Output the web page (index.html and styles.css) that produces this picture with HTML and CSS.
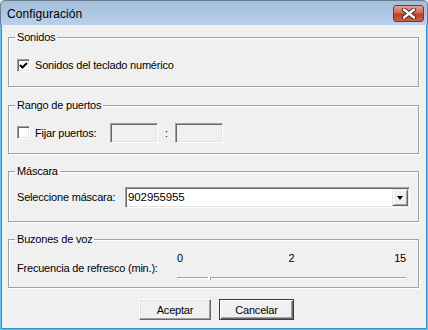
FILE: index.html
```html
<!DOCTYPE html>
<html lang="es">
<head>
  <meta charset="utf-8"/>
  <title>Configuración</title>
  <link rel="stylesheet" href="styles.css">
</head>
<body>
  <div class="window">
    <div class="titlebar">
      <span class="title">Configuración</span>
      <span class="close">
        <svg width="16" height="11" viewBox="0 0 16 11">
          <path d="M3 1.5 L13 9.5 M13 1.5 L3 9.5" stroke="#4a1f18" stroke-width="4.2" stroke-linecap="round"/>
          <path d="M3 1.5 L13 9.5 M13 1.5 L3 9.5" stroke="#fff" stroke-width="2.4" stroke-linecap="round"/>
        </svg>
      </span>
    </div>

    <div class="client">
      <fieldset class="group">
        <legend>Sonidos</legend>
        <div class="row row-sound">
          <span class="check"><svg width="9" height="9" viewBox="0 0 9 9"><path d="M1 4 L3.5 6.5 L8 2" fill="none" stroke="#000" stroke-width="2"/></svg></span>
          <span>Sonidos del teclado numérico</span>
        </div>
      </fieldset>

      <fieldset class="group">
        <legend>Rango de puertos</legend>
        <div class="row row-ports">
          <span class="check-label">
            <span class="check"></span>
            <span>Fijar puertos:</span>
          </span>
          <span class="field"></span>
          <span class="colon">:</span>
          <span class="field"></span>
        </div>
      </fieldset>

      <fieldset class="group">
        <legend>Máscara</legend>
        <div class="row row-mask">
          <span>Seleccione máscara:</span>
          <span class="combo">
            <span class="combo-text">902955955</span>
            <span class="combo-btn"><span class="arrow"></span></span>
          </span>
        </div>
      </fieldset>

      <fieldset class="group">
        <legend>Buzones de voz</legend>
        <div class="row row-voice">
          <span class="voice-label">Frecuencia de refresco (min.):</span>
          <div class="slider">
            <div class="ticks">
              <span>0</span>
              <span class="tick-mid">2</span>
              <span>15</span>
            </div>
            <div class="track"></div>
          </div>
        </div>
      </fieldset>

      <div class="buttons">
        <button class="btn btn-ok">Aceptar</button>
        <button class="btn btn-default">Cancelar</button>
      </div>
    </div>
  </div>
</body>
</html>
```

FILE: styles.css
```css
body {
  margin: 0;
  background: #f0f0f0;
  font-family: "Liberation Sans", Arial, sans-serif;
  font-size: 11px;
  color: #000;
}
.window {
  width: 428px;
  height: 330px;
  display: flex;
  flex-direction: column;
  box-sizing: border-box;
  overflow: hidden;
}
.titlebar {
  height: 25px;
  box-sizing: border-box;
  display: flex;
  align-items: flex-start;
  justify-content: space-between;
  border: 1px solid #6a7c90;
  border-bottom: none;
  border-radius: 5px 5px 0 0;
  background: linear-gradient(#a3bedb, #b9d1ea);
}
.title {
  font-size: 12px;
  line-height: 14px;
  margin: 6px 0 0 6px;
  letter-spacing: 0.1px;
}
.close {
  width: 31px;
  height: 17px;
  box-sizing: border-box;
  margin: 4px 3px 0 0;
  border: 1px solid #6b3b33;
  border-radius: 3px;
  background: linear-gradient(#e4a08f, #cf6a55 45%, #b8412b 55%, #c9604a);
  display: flex;
  align-items: center;
  justify-content: center;
}
.client {
  flex: 1;
  background: #f0f0f0;
  border: solid #5cc8f2;
  border-width: 0 1px 1px;
  box-shadow: inset 1px 0 #3b8bd0, inset -1px 0 #3b8bd0, inset 0 -1px #3b8bd0;
  padding: 6px 8px 0 7px;
}

/* group boxes */
.group {
  margin: 0 0 11px;
  padding: 0;
  border: 1px solid #a0a0a0;
  box-shadow: 1px 1px 0 #fff, inset 1px 1px 0 #fff;
  min-width: 0;
}
.group:first-child {
  margin-bottom: 12px;
}
.group legend {
  margin-left: 6px;
  padding: 0 2px;
  line-height: 13px;
  letter-spacing: -0.2px;
}
.row {
  display: flex;
  align-items: center;
  padding-left: 8px;
  letter-spacing: -0.2px;
}
.row-sound {
  height: 42px;
}
.row-ports {
  height: 41px;
}
.row-mask {
  height: 43px;
  align-items: flex-start;
  box-sizing: border-box;
  padding-top: 9px;
  padding-right: 8px;
}
.row-mask > span:first-child {
  line-height: 21px;
}
.row-voice {
  height: 41px;
  align-items: flex-start;
  padding-right: 12px;
}

/* checkbox */
.check {
  width: 13px;
  height: 13px;
  box-sizing: border-box;
  margin-right: 5px;
  background: #fff;
  border: 1px solid;
  border-color: #a0a0a0 #fff #fff #a0a0a0;
  box-shadow: inset 1px 1px 0 #696969, inset -1px -1px 0 #e3e3e3;
  display: flex;
  align-items: center;
  justify-content: center;
}
.check svg {
  display: block;
}
.check-label {
  display: flex;
  align-items: center;
  width: 93px;
}

/* sunken fields */
.field {
  width: 48px;
  height: 20px;
  box-sizing: border-box;
  background: #f0f0f0;
  border: 1px solid;
  border-color: #a0a0a0 #fff #fff #a0a0a0;
  box-shadow: inset 1px 1px 0 #696969, inset -1px -1px 0 #e3e3e3;
}
.colon {
  width: 17px;
  text-align: center;
}

/* combo */
.combo {
  margin-left: auto;
  width: 285px;
  height: 21px;
  box-sizing: border-box;
  background: #fff;
  border: 1px solid;
  border-color: #a0a0a0 #fff #fff #a0a0a0;
  box-shadow: inset 1px 1px 0 #696969, inset -1px -1px 0 #e3e3e3;
  padding: 1px;
  display: flex;
  align-items: stretch;
}
.combo-text {
  flex: 1;
  line-height: 17px;
  padding-left: 1px;
  font-size: 11.5px;
  letter-spacing: -0.1px;
}
.combo-btn {
  width: 16px;
  box-sizing: border-box;
  background: #f0f0f0;
  border: 1px solid;
  border-color: #e3e3e3 #696969 #696969 #e3e3e3;
  box-shadow: inset 1px 1px 0 #fff, inset -1px -1px 0 #a0a0a0;
  display: flex;
  align-items: center;
  justify-content: center;
}
.arrow {
  width: 0;
  height: 0;
  border-left: 3.5px solid transparent;
  border-right: 3.5px solid transparent;
  border-top: 4px solid #000;
  margin-top: 1px;
}

/* slider */
.voice-label {
  margin-top: 16px;
}
.slider {
  margin-left: auto;
  width: 229px;
  padding-top: 6px;
}
.ticks {
  display: flex;
  justify-content: space-between;
  line-height: 13px;
}
.tick-mid {
  margin-left: 6px;
}
.track {
  position: relative;
  margin-top: 12px;
  height: 0;
  border-top: 1px solid #a0a0a0;
  border-bottom: 1px solid #fff;
  border-left: 1px solid #a0a0a0;
  box-shadow: inset 0 1px 0 #696969;
}
.track::after {
  content: "";
  position: absolute;
  left: 30px;
  top: -1px;
  width: 2px;
  height: 3px;
  background: #fff;
  border-right: 1px solid #a0a0a0;
}

/* buttons */
.buttons {
  display: flex;
  align-items: flex-start;
  gap: 8px;
  padding-left: 131px;
}
.btn {
  font-family: "Liberation Sans", Arial, sans-serif;
  font-size: 11px;
  letter-spacing: -0.2px;
  color: #000;
  background: #f0f0f0;
  margin: 0;
  padding: 0;
  box-sizing: border-box;
  height: 21px;
}
.btn-ok {
  width: 72px;
  border: 1px solid;
  border-color: #fff #696969 #696969 #fff;
  box-shadow: inset -1px -1px 0 #a0a0a0, inset 1px 1px 0 #e3e3e3;
}
.btn-default {
  width: 75px;
  border: 1px solid #3c3c3c;
  box-shadow: inset 1px 1px 0 #fff, inset -1px -1px 0 #696969, inset -2px -2px 0 #a0a0a0;
}
```
